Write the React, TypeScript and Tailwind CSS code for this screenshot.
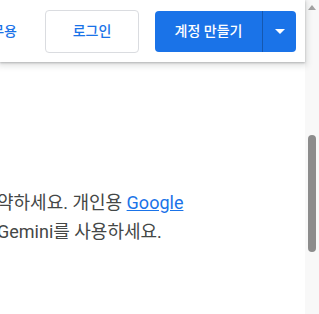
import React from 'react';

const font = { fontFamily: 'Roboto, "Noto Sans CJK KR", sans-serif' };

function Header() {
  return (
    <header className="relative z-10 flex h-[62px] shrink-0 items-center justify-end overflow-hidden bg-white pr-[9px] shadow-[0_1px_2px_rgba(60,64,67,0.3),0_2px_6px_2px_rgba(60,64,67,0.15)]">
      {/* nav links, clipped on the left */}
      <nav className="flex shrink-0 items-center gap-6 whitespace-nowrap text-[14px] font-medium text-[#1a73e8]">
        <span>Gemini 사용</span>
        <span>업무용</span>
      </nav>

      <button className="ml-[28px] flex h-[43px] w-[94px] shrink-0 items-center justify-center rounded-[4px] border border-[#dadce0] bg-white text-[14px] font-medium text-[#1a73e8]">
        로그인
      </button>

      <div className="ml-[16px] flex h-[41px] w-[141px] shrink-0 overflow-hidden rounded-[4px] bg-[#1a73e8] text-white">
        <button className="flex flex-1 items-center justify-center text-[14px] font-medium">
          계정 만들기
        </button>
        <div className="w-px bg-[#1558b0]" />
        <button className="flex w-[33px] items-center justify-center">
          <svg width="10" height="5" viewBox="0 0 10 5">
            <path d="M0 0h10L5 5z" fill="#fff" />
          </svg>
        </button>
      </div>
    </header>
  );
}

function Scrollbar() {
  return (
    <div className="flex w-[14px] shrink-0 flex-col items-center bg-[#f8f8f8]">
      <svg className="mt-[5px]" width="8" height="5" viewBox="0 0 8 5">
        <path d="M4 0L8 5H0z" fill="#a3a3a3" />
      </svg>
      <div className="mt-[125px] h-[117px] w-[8px] rounded-full bg-[#8c8c8c]" />
    </div>
  );
}

export default function App() {
  return (
    <div className="flex h-[314px] w-[319px] overflow-hidden bg-white" style={font}>
      <main className="flex min-w-0 flex-1 flex-col">
        <Header />
        <div className="overflow-hidden">
          <p className="ml-[-3px] mt-[126px] whitespace-nowrap text-[18px] leading-[29px] text-[#444746]">
            약하세요. 개인용{' '}
            <a href="#" className="text-[#1a73e8] underline">
              Google
            </a>
            <br />
            Gemini를 사용하세요.
          </p>
        </div>
      </main>
      <Scrollbar />
    </div>
  );
}
